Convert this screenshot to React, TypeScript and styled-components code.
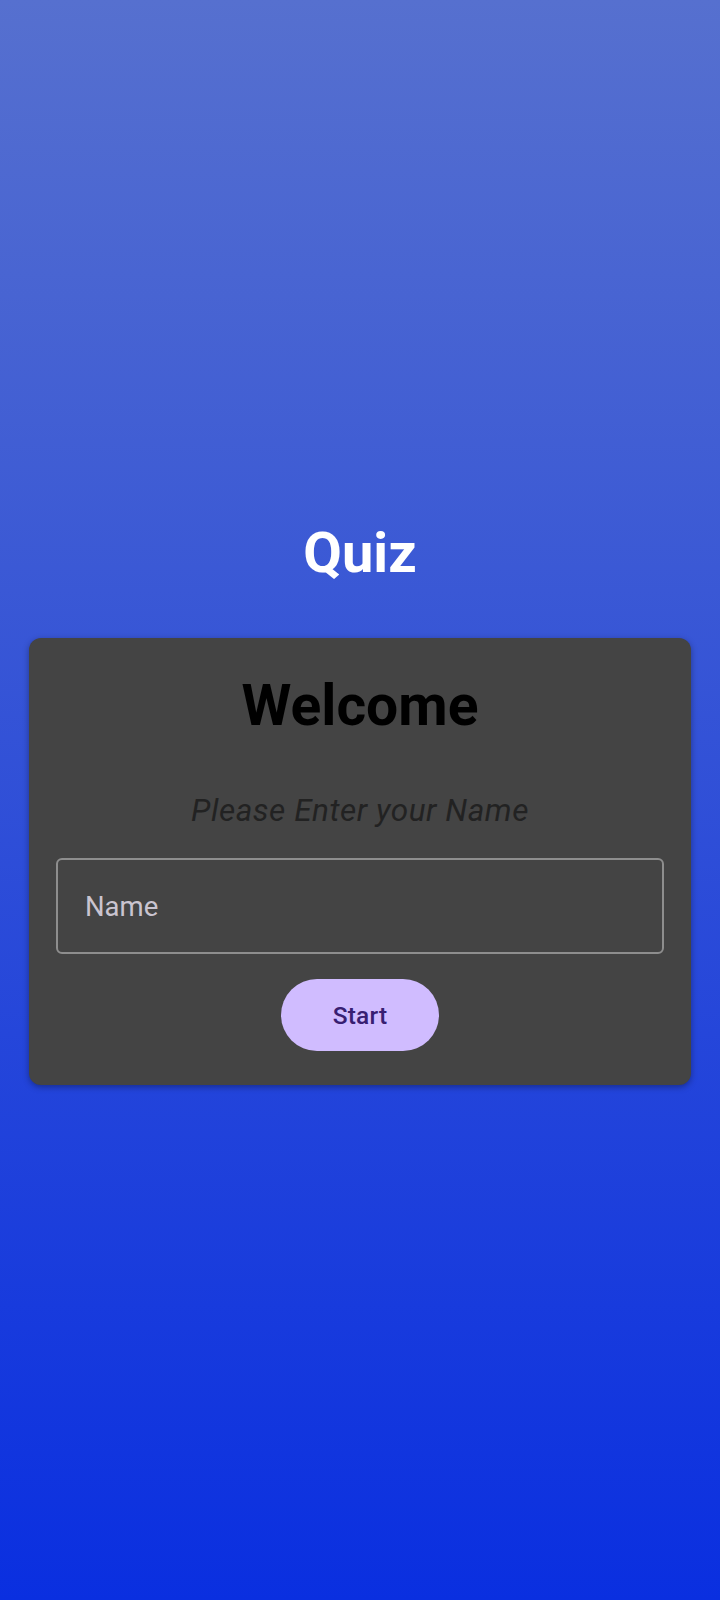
import React, { useState } from 'react';
import styled, { createGlobalStyle } from 'styled-components';

const GlobalStyle = createGlobalStyle`
  html, body {
    margin: 0;
    padding: 0;
  }
  body {
    font-family: Roboto, "Noto Sans", sans-serif;
  }
`;

const Screen = styled.div`
  min-height: 1600px;
  display: flex;
  flex-direction: column;
  justify-content: center;
  align-items: stretch;
  padding: 5px 29px 0;
  box-sizing: border-box;
  background: linear-gradient(180deg, #5670cf 0%, #0a2fe0 100%);
`;

const Title = styled.h1`
  margin: 0 0 52px;
  text-align: center;
  font-family: Roboto, sans-serif;
  font-weight: 700;
  font-size: 56px;
  line-height: 66px;
  color: #ffffff;
`;

const Card = styled.div`
  background-color: #444444;
  border-radius: 12px;
  padding: 35px 27px 34px;
  display: flex;
  flex-direction: column;
  align-items: center;
  box-shadow: 0 2px 6px rgba(0, 0, 0, 0.35);
`;

const Heading = styled.h2`
  margin: 0;
  font-family: Roboto, sans-serif;
  font-weight: 700;
  font-size: 57px;
  line-height: 66px;
  color: #000000;
`;

const Prompt = styled.p`
  margin: 53px 0 29px;
  font-family: Roboto, sans-serif;
  font-style: italic;
  font-size: 31.5px;
  letter-spacing: 0.55px;
  line-height: 37px;
  color: #222222;
`;

const NameField = styled.input`
  width: 100%;
  height: 96px;
  box-sizing: border-box;
  background: transparent;
  border: 2px solid #8e8e8e;
  border-radius: 6px;
  padding: 0 27px;
  font-family: Roboto, sans-serif;
  font-size: 27.5px;
  color: #e6e1e5;
  outline: none;

  &::placeholder {
    color: #cac4d0;
  }
`;

const StartButton = styled.button`
  margin-top: 25px;
  width: 158px;
  height: 72px;
  border: none;
  border-radius: 36px;
  background-color: #d0bcff;
  color: #381e72;
  font-family: Roboto, sans-serif;
  font-weight: 500;
  font-size: 24.5px;
  letter-spacing: 0.2px;
  cursor: pointer;
`;

export default function App() {
  const [nome, setNome] = useState('');

  return (
    <>
      <GlobalStyle />
      <Screen>
        <Title>Quiz</Title>
        <Card>
          <Heading>Welcome</Heading>
          <Prompt>Please Enter your Name</Prompt>
          <NameField
            placeholder="Name"
            value={nome}
            onChange={event => setNome(event.target.value)}
          />
          <StartButton type="button">Start</StartButton>
        </Card>
      </Screen>
    </>
  );
}
